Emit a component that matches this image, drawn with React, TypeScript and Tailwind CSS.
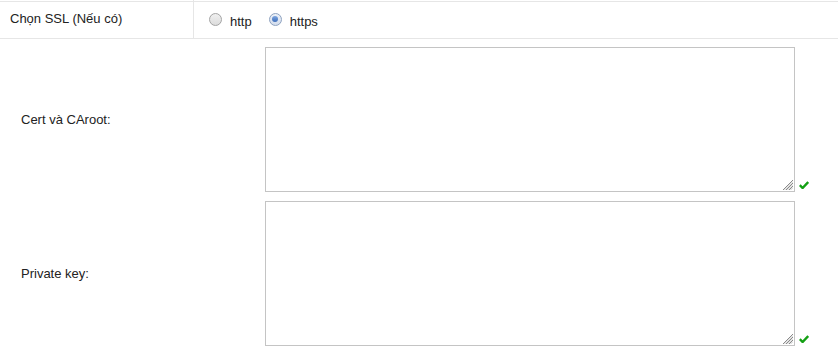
export default function App() {
  return (
    <div className="h-[350px] w-[838px] bg-white font-['Liberation_Sans',Arial,sans-serif] text-[13px] text-[#222]">
      <div className="flex h-[2px] border-b border-[#e6e6e6]">
        <div className="w-[194px] border-r border-[#e6e6e6]" />
      </div>
      <div className="flex h-[37px] border-b border-[#e6e6e6]">
        <div className="flex w-[194px] items-center border-r border-[#e6e6e6] pl-[10px] pb-[2px]">
          Chọn SSL (Nếu có)
        </div>
        <div className="flex items-center pl-[15px] pt-[4px]">
          <label className="flex items-center">
            <span className="mb-[6px] h-[13px] w-[13px] rounded-full border border-[#a4a4a4] bg-gradient-to-b from-[#f0f0f0] to-[#dcdcdc]" />
            <span className="ml-[8px]">http</span>
          </label>
          <label className="ml-[17px] flex items-center">
            <span className="mb-[6px] flex h-[13px] w-[13px] items-center justify-center rounded-full border border-[#8ea2c0] bg-gradient-to-b from-[#eef2f8] to-[#d2dcec]">
              <span className="h-[6px] w-[6px] rounded-full bg-gradient-to-b from-[#7ea6e0] to-[#3f6fba]" />
            </span>
            <span className="ml-[8px]">https</span>
          </label>
        </div>
      </div>
      <div className="flex flex-col gap-[9px] pt-[8px]">
        {['Cert và CAroot:', 'Private key:'].map((label) => (
          <div key={label} className="flex">
            <div className="flex w-[265px] items-center pl-[21px]">{label}</div>
            <div className="relative">
              <textarea className="block h-[145px] w-[530px] resize-none border border-[#c4c4c4] outline-none" />
              <svg className="absolute bottom-[2px] right-[2px]" width="11" height="11" viewBox="0 0 11 11" aria-hidden>
                <g stroke="#8a8a8a" strokeWidth="1">
                  <path d="M11 1 L1 11" />
                  <path d="M11 4 L4 11" />
                  <path d="M11 7 L7 11" />
                </g>
                <g stroke="#c8c8c8" strokeWidth="1">
                  <path d="M11 2.5 L2.5 11" />
                  <path d="M11 5.5 L5.5 11" />
                  <path d="M11 8.5 L8.5 11" />
                </g>
              </svg>
            </div>
            <div className="flex items-end pb-[3px] pl-[4px]">
              <svg width="10" height="8" viewBox="0 0 10 8" aria-hidden>
                <path d="M0.8 4.2 L3.6 7 L9.2 1" fill="none" stroke="#14a014" strokeWidth="2.4" />
              </svg>
            </div>
          </div>
        ))}
      </div>
    </div>
  )
}
